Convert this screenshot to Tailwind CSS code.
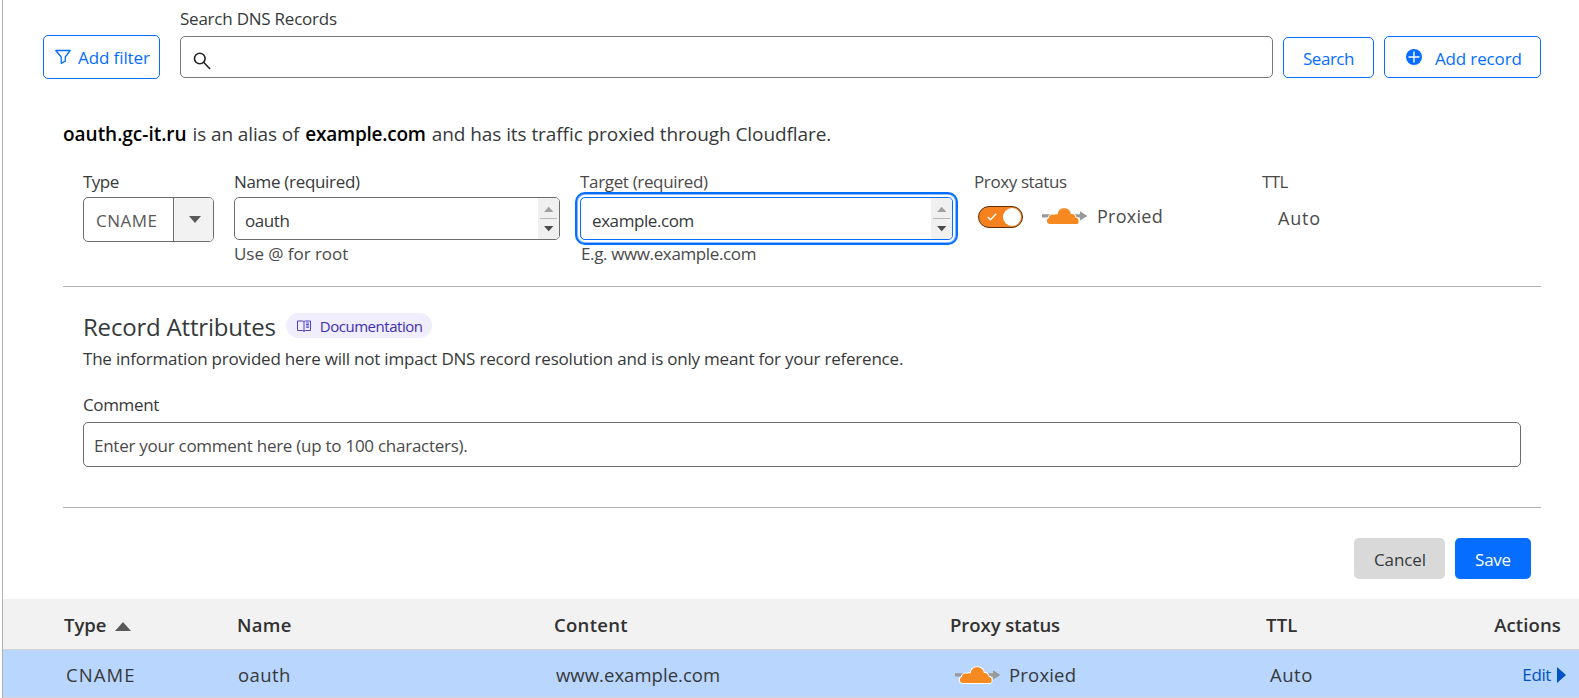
<!DOCTYPE html>
<html lang="en">
<head>
<meta charset="utf-8">
<title>DNS Records</title>
<script src="https://cdn.jsdelivr.net/npm/@tailwindcss/browser@4"></script>
</head>
<body class="bg-white">
<svg class="hidden">
  <symbol id="cloud" viewBox="0 0 46 18">
    <path d="M0 7.200h38V4.200l7.500 4.700-7.500 4.700v-3H0z" fill="#999"/>
    <path d="M7.500 17C4 16.300 4 11.700 7 11 6.800 8.300 9.500 6.800 12 8 13.200 7 14.500 7.200 15.500 7.700 16.200 3.200 18.800 1.300 22.300 1.300c3.800 0 6.200 2.600 6.600 5.900 2.300-.6 4.200.7 4.600 3.200 3.300.4 4.200 4.500 2 6.600z" fill="#f6891f" stroke="#fff" stroke-width="2" paint-order="stroke"/>
  </symbol>
  <symbol id="spinner" viewBox="0 0 21 41">
    <path d="M6 14l4.700-5.200L15.400 14z" fill="#a0a0a0"/>
    <path d="M2 20.500h17" stroke="#b8b8b8"/>
    <path d="M6 28h9.400l-4.700 5.200z" fill="#4a4a4a"/>
  </symbol>
</svg>
<main class="flex h-[698px] w-[1579px] overflow-hidden font-['Open_Sans',sans-serif] text-[17px] leading-6 text-[#36393a]">
  <div class="w-[3px] shrink-0 border-r border-[#b0b0b0]"></div>
  <div class="flex min-w-0 grow flex-col">

    <!-- Search toolbar -->
    <section class="flex h-[109px] shrink-0 items-start pl-[40px] text-[#056dff]">
      <button class="mt-[35px] flex h-11 w-[117px] items-center rounded-[5px] border border-[#056dff] pl-[11px]">
        <svg class="mr-[7px] size-4" viewBox="0 0 16 16" fill="none" stroke="#056dff" stroke-width="1.3" stroke-linejoin="round"><path d="M.8 1.500h14.400L10.300 8v4.200L6.200 14.300V8z"/></svg>
        <span class="pt-[2px] tracking-[-0.1px]">Add filter</span>
      </button>
      <div class="ml-5 w-[1093px] pt-[7px]">
        <label class="block h-[29px] tracking-[-0.23px] text-[#36393a]">Search DNS Records</label>
        <div class="flex h-[42px] items-center rounded-[5px] border border-[#797979] pl-[12px] pt-[7px]">
          <svg class="size-[18px]" viewBox="0 0 18 18" fill="none" stroke="#222" stroke-width="1.6"><circle cx="6.800" cy="6.500" r="5.300"/><path d="M10.600 10.300L17.100 17"/></svg>
        </div>
      </div>
      <button class="ml-[10px] mt-[37px] h-[41px] w-[91px] rounded-[5px] border border-[#056dff] pt-[3px] tracking-[-0.48px]">Search</button>
      <button class="ml-[10px] mt-[36px] flex h-[42px] w-[157px] items-center rounded-[5px] border border-[#056dff] pl-[21px] pt-[4px]">
        <svg class="-mt-[5px] mr-[13px] size-4" viewBox="0 0 16 16"><circle cx="8" cy="8" r="8" fill="#056dff"/><path d="M8 2.500v11M2.500 8h11" stroke="#fff" stroke-width="1.400"/></svg>
        <span class="tracking-[-0.15px]">Add record</span>
      </button>
    </section>

    <!-- Record editor -->
    <section class="ml-[60px] h-[490px] w-[1478px] shrink-0">
      <p class="flex h-[61px] whitespace-pre pt-[13px] text-[19px]"><b class="font-semibold tracking-[-0.02px] text-black">oauth.gc-it.ru</b><span class="ml-[6px] tracking-[-0.12px]">is an alias of</span><b class="ml-[6px] font-semibold tracking-[-0.24px] text-black">example.com</b><span class="ml-[6px] tracking-[-0.07px]">and has its traffic proxied through Cloudflare.</span></p>

      <div class="flex h-[117px] border-b border-[#b3b3b3] pl-[20px]">
        <div class="w-[151px]">
          <label class="block h-[27px] tracking-[-0.53px]">Type</label>
          <div class="flex h-[45px] w-[131px] overflow-hidden rounded-[5px] border border-[#6d6d6d]">
            <div class="w-[90px] border-r border-[#6d6d6d] pl-3 pt-[11px] tracking-[0.49px] text-[#595959]">CNAME</div>
            <div class="flex grow items-center justify-center bg-[#f2f2f2] pl-[2px]"><svg class="h-[7px] w-3" viewBox="0 0 12 7"><path d="M0 0h12L6 7z" fill="#595959"/></svg></div>
          </div>
        </div>
        <div class="w-[346px]">
          <label class="block h-[27px] tracking-[-0.32px]">Name (required)</label>
          <div class="flex h-[43px] w-[326px] justify-between overflow-hidden rounded-[5px] border border-[#6d6d6d]">
            <span class="pl-[10px] pt-[11px] tracking-[-0.41px]">oauth</span>
            <svg class="h-[41px] w-[21px] bg-[#f0f0f0]"><use href="#spinner"/></svg>
          </div>
          <p class="mt-[2px] tracking-[-0.05px] text-[#4a4a4a]">Use @ for root</p>
        </div>
        <div class="w-[393px]">
          <label class="block h-[27px] tracking-[-0.34px] text-[#4a4a4a]">Target (required)</label>
          <div class="flex h-[43px] w-[373px] justify-between overflow-hidden rounded-[5px] border border-[#056dff] shadow-[0_0_0_2px_#fff,0_0_0_3px_#8abbff,0_0_0_5px_#056dff]">
            <span class="pl-[11px] pt-[11px] tracking-[-0.42px]">example.com</span>
            <svg class="h-[41px] w-[21px] bg-[#f0f0f0]"><use href="#spinner"/></svg>
          </div>
          <p class="mt-[2px] pl-px tracking-[-0.37px] text-[#4a4a4a]">E.g. www.example.com</p>
        </div>
        <div class="w-[289px]">
          <label class="block h-[27px] pl-px tracking-[-0.39px] text-[#4a4a4a]">Proxy status</label>
          <div class="flex items-center pl-[5px] pt-[6px]">
            <div class="mt-[3px] flex h-[22px] w-[45px] items-center justify-between rounded-full border border-[#5c2f0c] bg-[#f6821f] pl-[8px] pr-px">
              <svg class="h-2 w-[10px]" viewBox="0 0 10 8" fill="none" stroke="#fff" stroke-width="1.300"><path d="M.8 4l2.700 2.800L9.200.8"/></svg>
              <div class="size-[18px] rounded-full bg-white"></div>
            </div>
            <svg class="ml-[19px] h-[18px] w-[46px]"><use href="#cloud"/></svg>
            <span class="ml-[9px] text-[18px] tracking-[0.27px] text-[#4a4a4a]">Proxied</span>
          </div>
        </div>
        <div>
          <label class="block h-[27px] tracking-[-0.61px] text-[#4a4a4a]">TTL</label>
          <p class="pl-[16px] pt-[9px] text-[18px] tracking-[0.8px] text-[#4a4a4a]">Auto</p>
        </div>
      </div>

      <div class="h-[221px] border-b border-[#b3b3b3] px-5 pt-[23px]">
        <div class="flex h-[37px] items-start">
          <h2 class="pt-px text-[24px] leading-8 tracking-[-0.19px]">Record Attributes</h2>
          <a class="ml-[10px] mt-[3px] flex h-[25px] items-center rounded-full bg-[#f0edfd] pl-[11px] pr-[10px] text-[15px] tracking-[-0.47px] text-[#3f2fae]">
            <svg class="mr-[9px] h-3 w-[14px]" viewBox="0 0 14 12" fill="none" stroke="#4f3fc0"><path d="M.5 1h5q1.500 0 1.500 1v9.500q0-1-1.500-1h-5zM7 2q0-1 1.500-1h5v9.500h-5q-1.500 0-1.500 1"/><path d="M9 3h3M9 4.500h3M9 6h3M9 7.300h3" stroke-width=".9"/></svg>
            Documentation
          </a>
        </div>
        <p class="h-[46px] tracking-[-0.21px]">The information provided here will not impact DNS record resolution and is only meant for your reference.</p>
        <label class="block h-[29px] tracking-[-0.36px]">Comment</label>
        <div class="h-[45px] rounded-[5px] border border-[#6d6d6d] pl-[10px] pt-[11px] tracking-[-0.26px] text-[#4a4a4a]">Enter your comment here (up to 100 characters).</div>
      </div>

      <div class="flex justify-end gap-[10px] pr-[10px] pt-[30px]">
        <button class="h-[41px] w-[91px] rounded-[5px] bg-[#d9d9d9] pl-px pt-[3px] tracking-[-0.1px]">Cancel</button>
        <button class="h-[41px] w-[76px] rounded-[5px] bg-[#056dff] pt-[3px] tracking-[-0.25px] text-white">Save</button>
      </div>
    </section>

    <!-- Records table -->
    <section class="grid shrink-0 text-[18.5px]">
      <div class="grid h-[51px] grid-cols-[174px_317px_398px_315px_1fr] items-center border-b border-[#d5d5d5] bg-[#f2f2f2] pl-[61px] pr-[18px] pt-[2px] font-semibold text-[#313131]">
        <span class="flex items-center">Type<svg class="ml-[8px] mt-[2px] h-[9px] w-4" viewBox="0 0 16 9"><path d="M0 9l8-9 8 9z" fill="#595959"/></svg></span>
        <span class="-ml-px tracking-[0.28px]">Name</span>
        <span class="-ml-px tracking-[0.3px]">Content</span>
        <span class="-ml-[3px] tracking-[-0.05px]">Proxy status</span>
        <span class="-ml-[2px] flex justify-between"><span class="tracking-[0.2px]">TTL</span><span class="tracking-[0.13px]">Actions</span></span>
      </div>
      <div class="grid h-[48px] grid-cols-[174px_317px_398px_315px_1fr] items-center border-b border-[#d5d5d5] bg-[#b9d6ff] pl-[61px] pr-[13px] pt-[2px]">
        <span class="pl-[2px] tracking-[1.1px]">CNAME</span>
        <span class="tracking-[0.41px]">oauth</span>
        <span class="pl-px tracking-[0.03px]">www.example.com</span>
        <span class="flex items-center pl-[2px]"><svg class="mr-[8px] h-[18px] w-[46px]"><use href="#cloud"/></svg><span class="tracking-[0.19px]">Proxied</span></span>
        <span class="flex items-center justify-between"><span class="pl-[2px] tracking-[0.5px]">Auto</span><a class="flex items-center text-[17px] tracking-[-0.38px] text-[#0051c3]"><span class="pt-px">Edit</span><svg class="ml-[6px] h-4 w-[9px]" viewBox="0 0 9 16"><path d="M0 0l9 8-9 8z" fill="#0051c3"/></svg></a></span>
      </div>
    </section>
  </div>
</main>
</body>
</html>
